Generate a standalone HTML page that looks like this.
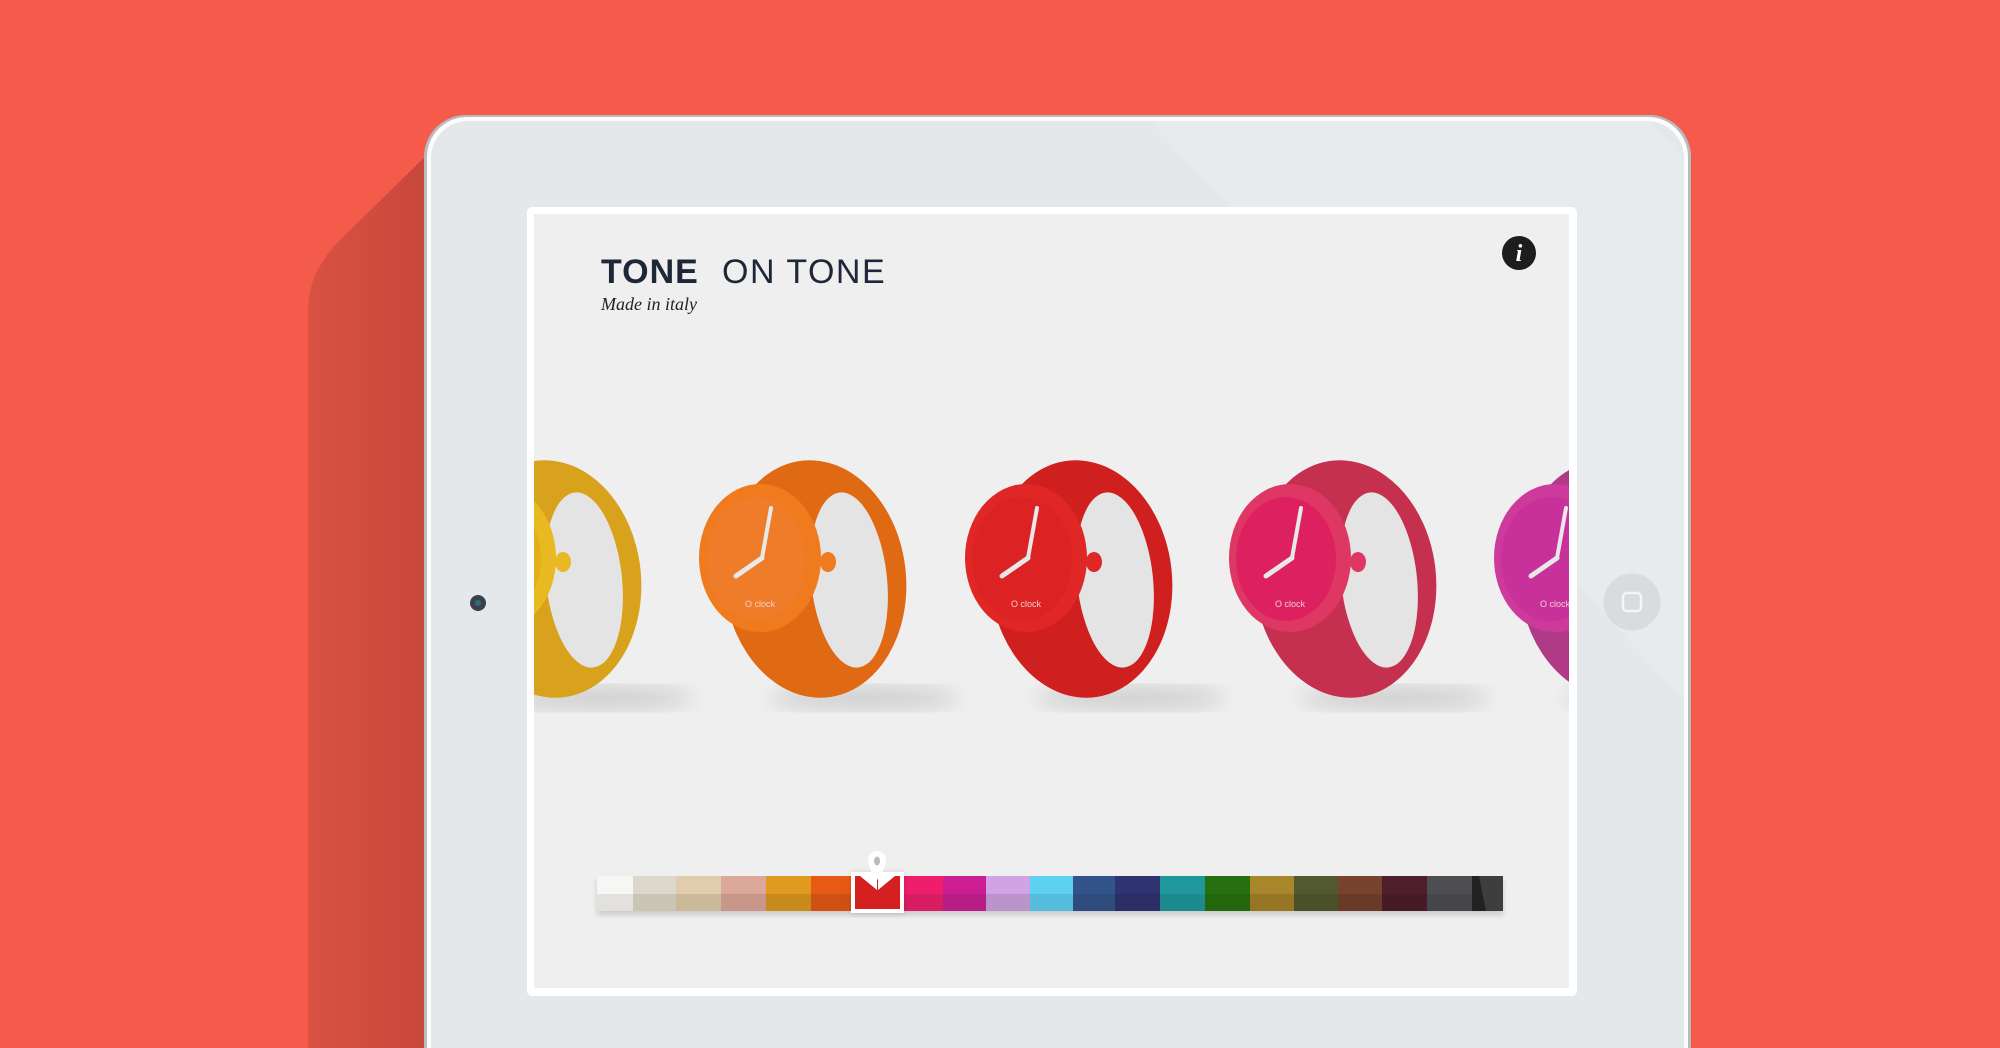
<!DOCTYPE html>
<html><head><meta charset="utf-8"><style>
html,body{margin:0;padding:0}
body{width:2000px;height:1048px;overflow:hidden;background:#f45b4a;position:relative;font-family:"Liberation Sans",sans-serif}
.abs{position:absolute}
</style></head><body>
<svg class="abs" style="left:0;top:0" width="2000" height="1048">
  <defs>
    <linearGradient id="sh" x1="0" x2="1" y1="0" y2="0">
      <stop offset="0" stop-color="#d95243"/><stop offset="1" stop-color="#c5463a"/>
    </linearGradient>
  </defs>
  <path d="M432 150 L340 240 Q308 272 308 310 L308 1048 L440 1048 L440 150 Z" fill="url(#sh)"/>
  <rect x="424" y="115" width="1267" height="980" rx="42" fill="#b9bcbf"/>
  <rect x="427" y="117" width="1261" height="980" rx="40" fill="#fdfdfd"/>
  <rect x="431" y="121" width="1253" height="980" rx="37" fill="#e4e8eb"/>
  <polygon points="1150,121 1650,121 1684,160 1684,700" fill="#e9ecef" opacity="0.6"/>
  <rect x="527" y="207" width="1050" height="789" rx="5" fill="#ffffff"/>
  <rect x="534" y="214" width="1035" height="774" fill="#efefef"/>
  <circle cx="478" cy="603" r="8" fill="#3a4148"/>
  <circle cx="478" cy="603" r="3" fill="#2a6f80"/>
  <circle cx="1632" cy="602" r="29" fill="#d9dcdf" stroke="#e9ecee" stroke-width="1"/>
  <rect x="1623" y="593" width="18" height="18" rx="4" fill="none" stroke="#f4f5f6" stroke-width="2.5"/>
</svg>

<svg class="abs" style="left:534px;top:214px" width="1035" height="774">
  <defs>
    <filter id="bl"><feGaussianBlur stdDeviation="10"/></filter>
    <g id="w">
      <ellipse cx="165" cy="258" rx="95" ry="12" fill="#000" opacity="0.13" filter="url(#bl)"/>
      <ellipse cx="116" cy="139" rx="91" ry="119" transform="rotate(-6 116 139)" fill="var(--b)"/>
      <ellipse cx="150" cy="140" rx="38" ry="88" transform="rotate(-6 150 140)" fill="#e4e4e4"/>
      <ellipse cx="61" cy="118" rx="61" ry="74" fill="var(--f)"/>
      <ellipse cx="57" cy="119" rx="50" ry="62" fill="var(--d)"/>
      <ellipse cx="129" cy="122" rx="8" ry="10" fill="var(--f)"/>
      <line x1="63" y1="118" x2="37" y2="136" stroke="#e8e8e8" stroke-width="5" stroke-linecap="round"/>
      <line x1="63" y1="118" x2="72" y2="68" stroke="#e8e8e8" stroke-width="4" stroke-linecap="round"/>
      <text x="46" y="167" font-size="9" fill="#f0d0d0" font-family="Liberation Sans">O clock</text>
    </g>
  </defs>
  <g transform="translate(-100,226)" style="--b:#d9a21c;--f:#eab820;--d:#e2ae1a"><use href="#w"/></g>
  <g transform="translate(165,226)" style="--b:#e06a14;--f:#f07a1e;--d:#ef7c28"><use href="#w"/></g>
  <g transform="translate(431,226)" style="--b:#cf1f1f;--f:#e12626;--d:#dc2222"><use href="#w"/></g>
  <g transform="translate(695,226)" style="--b:#c4304e;--f:#df3764;--d:#dd2060"><use href="#w"/></g>
  <g transform="translate(960,226)" style="--b:#b03a85;--f:#cc3a9c;--d:#c8309a"><use href="#w"/></g>
  <circle cx="985" cy="39" r="17" fill="#1d1d1d"/>
  <text x="985" y="47" text-anchor="middle" font-family="Liberation Serif" font-style="italic" font-weight="bold" font-size="24" fill="#fff">i</text>
</svg>

<div class="abs" style="left:601px;top:253px;font-size:34px;font-weight:bold;color:#1d2738;letter-spacing:1px">TONE</div>
<div class="abs" style="left:722px;top:253px;font-size:34px;color:#1d2738;letter-spacing:1.5px">ON TONE</div>
<div class="abs" style="left:601px;top:294px;font-family:'Liberation Serif',serif;font-style:italic;font-size:18px;color:#222">Made in italy</div>

<svg class="abs" style="left:590px;top:840px" width="930" height="100">
  <defs><filter id="b2"><feGaussianBlur stdDeviation="3"/></filter></defs>
  <rect x="7" y="40" width="906" height="35" fill="#000" opacity="0.15" filter="url(#b2)"/>
  <g transform="translate(0,36)">
    <rect x="7" y="0" width="36" height="18" fill="#f6f6f4"/><rect x="7" y="18" width="36" height="17" fill="#e2e1dd"/>
    <rect x="43" y="0" width="43" height="18" fill="#dcd9cc"/><rect x="43" y="18" width="43" height="17" fill="#cac6b6"/>
    <rect x="86" y="0" width="45" height="18" fill="#dfcdae"/><rect x="86" y="18" width="45" height="17" fill="#ccb99a"/>
    <rect x="131" y="0" width="45" height="18" fill="#dca89a"/><rect x="131" y="18" width="45" height="17" fill="#c9968a"/>
    <rect x="176" y="0" width="45" height="18" fill="#e09a20"/><rect x="176" y="18" width="45" height="17" fill="#c98a1c"/>
    <rect x="221" y="0" width="42" height="18" fill="#e85a14"/><rect x="221" y="18" width="42" height="17" fill="#d05014"/>
    <rect x="312" y="0" width="41" height="18" fill="#ee1e6a"/><rect x="312" y="18" width="41" height="17" fill="#d81e62"/>
    <rect x="353" y="0" width="43" height="18" fill="#cc1e92"/><rect x="353" y="18" width="43" height="17" fill="#b81c86"/>
    <rect x="396" y="0" width="44" height="18" fill="#d0a4e4"/><rect x="396" y="18" width="44" height="17" fill="#bc94cc"/>
    <rect x="440" y="0" width="43" height="18" fill="#5ed0f2"/><rect x="440" y="18" width="43" height="17" fill="#56bcdc"/>
    <rect x="483" y="0" width="42" height="18" fill="#33548a"/><rect x="483" y="18" width="42" height="17" fill="#2e4c7c"/>
    <rect x="525" y="0" width="45" height="18" fill="#2e3470"/><rect x="525" y="18" width="45" height="17" fill="#2a2e64"/>
    <rect x="570" y="0" width="45" height="18" fill="#1f989c"/><rect x="570" y="18" width="45" height="17" fill="#1c8a8e"/>
    <rect x="615" y="0" width="45" height="18" fill="#277010"/><rect x="615" y="18" width="45" height="17" fill="#24660e"/>
    <rect x="660" y="0" width="44" height="18" fill="#a8862a"/><rect x="660" y="18" width="44" height="17" fill="#967624"/>
    <rect x="704" y="0" width="44" height="18" fill="#52592e"/><rect x="704" y="18" width="44" height="17" fill="#4a5028"/>
    <rect x="748" y="0" width="44" height="18" fill="#78422c"/><rect x="748" y="18" width="44" height="17" fill="#6a3a28"/>
    <rect x="792" y="0" width="45" height="18" fill="#4e1e2a"/><rect x="792" y="18" width="45" height="17" fill="#461a26"/>
    <rect x="837" y="0" width="45" height="18" fill="#4d4d52"/><rect x="837" y="18" width="45" height="17" fill="#46464a"/>
    <rect x="882" y="0" width="31" height="35" fill="#3e3e3e"/><polygon points="882,0 889,0 896,35 882,35" fill="#222"/>
  </g>
  <rect x="261" y="32" width="53" height="42" fill="#000" opacity="0.12" filter="url(#b2)"/>
  <rect x="261" y="32" width="53" height="41" fill="#fff"/>
  <rect x="265" y="36" width="45" height="33" fill="#d42020"/>
  <polygon points="270,36 287,36 287,50" fill="#fff"/>
  <polygon points="305,36 288,36 288,50" fill="#fff"/>
  <path d="M287 11 a9 9 0 0 1 9 9 q0 8 -9 20 q-9 -12 -9 -20 a9 9 0 0 1 9 -9z" fill="#fff"/>
  <ellipse cx="287" cy="21" rx="3" ry="4.5" fill="#bbb"/>
</svg>
</body></html>
